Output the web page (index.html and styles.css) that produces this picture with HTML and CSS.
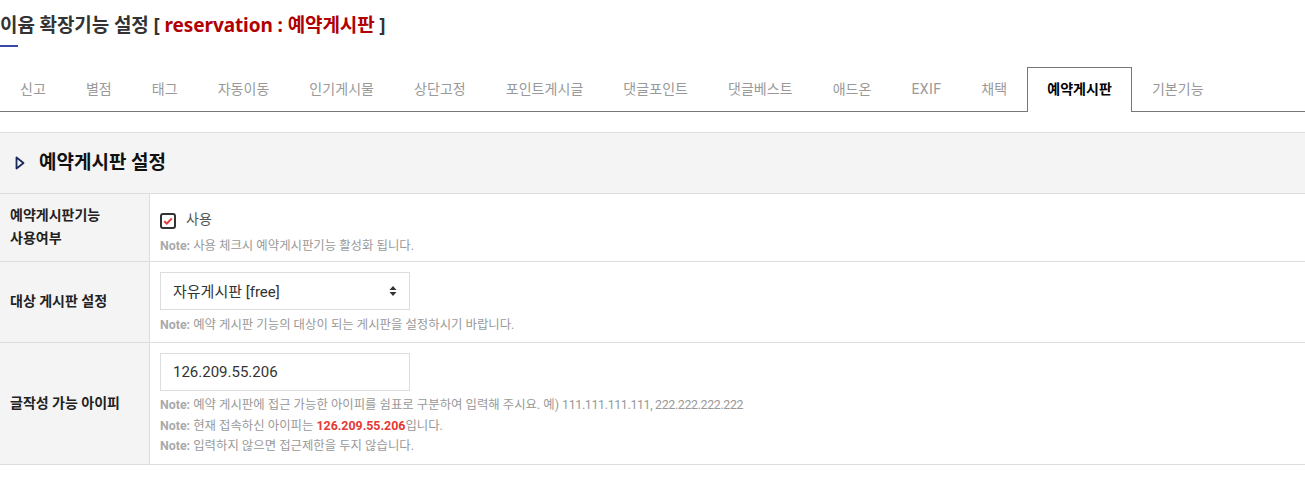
FILE: index.html
```html
<!DOCTYPE html>
<html lang="ko">
<head>
<meta charset="utf-8">
<title>이윰 확장기능 설정</title>
<link rel="stylesheet" href="styles.css">
</head>
<body>
<div class="page">
  <div class="title-wrap">
    <h2 class="title">이윰 확장기능 설정 [ <span class="title-red">reservation : 예약게시판</span> ]</h2>
    <div class="title-bar"></div>
  </div>

  <ul class="tabs">
    <li class="tab">신고</li>
    <li class="tab">별점</li>
    <li class="tab">태그</li>
    <li class="tab">자동이동</li>
    <li class="tab">인기게시물</li>
    <li class="tab">상단고정</li>
    <li class="tab">포인트게시글</li>
    <li class="tab">댓글포인트</li>
    <li class="tab">댓글베스트</li>
    <li class="tab">애드온</li>
    <li class="tab tab-latin">EXIF</li>
    <li class="tab">채택</li>
    <li class="tab active">예약게시판</li>
    <li class="tab">기본기능</li>
  </ul>

  <div class="panel-head">
    <svg class="tri" width="10" height="14" viewBox="0 0 10 14"><path d="M1.5 1.5 L8.5 7 L1.5 12.5 Z" fill="none" stroke="#1a2a5a" stroke-width="1.8" stroke-linejoin="round"/></svg>
    <h3 class="panel-title">예약게시판 설정</h3>
  </div>

  <div class="form">
    <div class="row">
      <div class="label">예약게시판기능<br>사용여부</div>
      <div class="cell cell-1">
        <label class="check">
          <svg class="cbox" width="16" height="16" viewBox="0 0 16 16"><rect x="1" y="1" width="14" height="14" rx="2" fill="#fff" stroke="#333" stroke-width="2"/><path d="M4.2 8.2 L6.8 10.6 L11.8 5.4" fill="none" stroke="#e53935" stroke-width="2"/></svg>
          <span class="check-text">사용</span>
        </label>
        <p class="note"><b>Note:</b> 사용 체크시 예약게시판기능 활성화 됩니다.</p>
      </div>
    </div>
    <div class="row">
      <div class="label">대상 게시판 설정</div>
      <div class="cell cell-2">
        <div class="select">
          <span>자유게시판 [free]</span>
          <svg width="8" height="12" viewBox="0 0 8 12"><path d="M4 1 L7.5 5 L0.5 5 Z M0.5 7 L7.5 7 L4 11 Z" fill="#333"/></svg>
        </div>
        <p class="note note-gap"><b>Note:</b> 예약 게시판 기능의 대상이 되는 게시판을 설정하시기 바랍니다.</p>
      </div>
    </div>
    <div class="row">
      <div class="label">글작성 가능 아이피</div>
      <div class="cell cell-3">
        <div class="input">126.209.55.206</div>
        <p class="note note-gap"><b>Note:</b> 예약 게시판에 접근 가능한 아이피를 쉼표로 구분하여 입력해 주시요. 예) <span class="num">111.111.111.111, 222.222.222.222</span></p>
        <p class="note"><b>Note:</b> 현재 접속하신 아이피는 <strong class="ip">126.209.55.206</strong>입니다.</p>
        <p class="note"><b>Note:</b> 입력하지 않으면 접근제한을 두지 않습니다.</p>
      </div>
    </div>
  </div>
</div>
</body>
</html>
```

FILE: styles.css
```css
* { box-sizing: border-box; }
html, body { margin: 0; padding: 0; background: #fff; }
body {
  font-family: Roboto, "Noto Sans CJK KR", "Noto Sans", sans-serif;
  color: #333;
}
.page { width: 1305px; }

.title-wrap { padding-top: 12px; }
.title {
  margin: 0;
  font-family: "Noto Sans", "Noto Sans CJK KR", sans-serif;
  font-size: 19px;
  line-height: 27px;
  font-weight: 700;
  color: #333;
  letter-spacing: -0.1px;
}
.title-red { color: #b00000; }
.title-bar {
  margin-top: 6px;
  width: 18px;
  height: 2px;
  background: #3949ab;
}

.tabs {
  list-style: none;
  margin: 20px 0 0;
  padding: 0;
  display: flex;
  border-bottom: 1px solid #777;
  height: 45px;
}
.tab {
  height: 44px;
  line-height: 42px;
  padding: 0 19px;
  border: 1px solid transparent;
  border-bottom: none;
  font-size: 14px;
  color: #999;
  white-space: nowrap;
  letter-spacing: 0.05px;
}
.tab-latin { letter-spacing: 0.4px; }
.tab.active {
  border-color: #777;
  background: #fff;
  color: #000;
  font-weight: 700;
  height: 45px;
}

.panel-head {
  margin-top: 20px;
  height: 62px;
  background: #f4f4f4;
  border-top: 1px solid #ddd;
  border-bottom: 1px solid #ddd;
  display: flex;
  align-items: center;
  padding-left: 15px;
  gap: 14px;
}
.tri { display: block; }
.panel-title {
  margin: 0;
  font-size: 19px;
  font-weight: 700;
  color: #111;
  line-height: 26px;
}

.row {
  display: grid;
  grid-template-columns: 150px 1fr;
  border-bottom: 1px solid #ddd;
}
.label {
  background: #f4f4f4;
  border-right: 1px solid #ddd;
  padding: 0 10px;
  font-size: 14px;
  font-weight: 700;
  color: #222;
  line-height: 23px;
  display: flex;
  align-items: center;
}
.cell { padding: 10px 10px 7px; }
.cell-1 { padding-top: 14px; padding-bottom: 4px; }
.cell-3 { padding-bottom: 7px; }

.check { display: flex; align-items: center; gap: 10px; height: 20px; }
.cbox { display: block; margin-top: 6px; }
.check-text { font-size: 14px; color: #555; }

.note {
  margin: 0;
  font-size: 12.4px;
  line-height: 20.5px;
  color: #999;
}
.note .num { letter-spacing: -0.35px; }
.cell-1 .note { margin-top: 8px; }
.note b { font-weight: 700; color: #aaa; }
.note-gap { margin-top: 5px; }
.cell-3 .note-gap { margin-top: 4px; }
.ip { color: #e53935; font-weight: 700; }

.select, .input {
  width: 250px;
  height: 38px;
  border: 1px solid #ddd;
  background: #fff;
  padding: 0 12px;
  font-size: 15px;
  color: #333;
  display: flex;
  align-items: center;
  justify-content: space-between;
}
.select svg { display: block; }
```
